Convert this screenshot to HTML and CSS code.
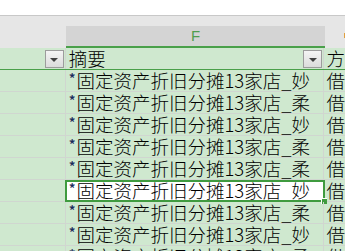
FILE: index.html
```html
<!DOCTYPE html>
<html>
<head>
<meta charset="utf-8">
<link rel="stylesheet" href="styles.css">
</head>
<body>
<div class="sheet">
  <div class="topbar"></div>
  <div class="band"></div>
  <div class="colhead">
    <div class="ch ch-e"></div>
    <div class="ch ch-f">F</div>
    <div class="ch ch-g"><span class="gmark"></span></div>
  </div>
  <div class="row row-filter">
    <div class="c c-e"><span class="fbtn"><span class="tri"></span></span></div>
    <div class="c c-f">摘要<span class="fbtn"><span class="tri"></span></span></div>
    <div class="c c-g">方</div>
  </div>
  <div class="row"><div class="c c-e"></div><div class="c c-f"><span class="ast">*</span>固定资产折旧分摊13家店_妙</div><div class="c c-g">借</div></div>
  <div class="row"><div class="c c-e"></div><div class="c c-f"><span class="ast">*</span>固定资产折旧分摊13家店_柔</div><div class="c c-g">借</div></div>
  <div class="row"><div class="c c-e"></div><div class="c c-f"><span class="ast">*</span>固定资产折旧分摊13家店_妙</div><div class="c c-g">借</div></div>
  <div class="row"><div class="c c-e"></div><div class="c c-f"><span class="ast">*</span>固定资产折旧分摊13家店_柔</div><div class="c c-g">借</div></div>
  <div class="row"><div class="c c-e"></div><div class="c c-f"><span class="ast">*</span>固定资产折旧分摊13家店_柔</div><div class="c c-g">借</div></div>
  <div class="row"><div class="c c-e"></div><div class="c c-f sel"><span class="ast">*</span>固定资产折旧分摊13家店_妙<span class="selbox"><span class="handle"></span></span></div><div class="c c-g">借</div></div>
  <div class="row"><div class="c c-e"></div><div class="c c-f"><span class="ast">*</span>固定资产折旧分摊13家店_柔</div><div class="c c-g">借</div></div>
  <div class="row"><div class="c c-e"></div><div class="c c-f"><span class="ast">*</span>固定资产折旧分摊13家店_妙</div><div class="c c-g">借</div></div>
  <div class="row"><div class="c c-e"></div><div class="c c-f"><span class="ast">*</span>固定资产折旧分摊13家店_柔</div><div class="c c-g">借</div></div>
</div>
</body>
</html>
```
FILE: styles.css
```css
html, body {
  margin: 0;
  padding: 0;
  background: #ffffff;
  overflow: hidden;
}
.sheet {
  width: 345px;
  height: 251px;
  overflow: hidden;
  font-family: "Noto Sans CJK SC", "Noto Sans", sans-serif;
}
.topbar {
  height: 15px;
  background: #ffffff;
  border-bottom: 1px solid #c8c8c8;
}
.band {
  height: 10px;
  background: #e6e6e6;
}
.colhead {
  display: flex;
  height: 22px;
}
.ch {
  box-sizing: border-box;
  height: 22px;
}
.ch-e {
  width: 66px;
  background: #e6e6e6;
}
.ch-f {
  width: 259px;
  background: #d4d4d4;
  border-bottom: 2px solid #4aa04a;
  color: #4f9e4f;
  font-family: "Liberation Sans", sans-serif;
  font-size: 15px;
  line-height: 20px;
  text-align: center;
}
.ch-g {
  flex: 1;
  background: #e6e6e6;
  position: relative;
}
.gmark {
  position: absolute;
  right: 0;
  top: 7px;
  width: 1px;
  height: 5px;
  background: #e0a040;
}
.row {
  display: flex;
  height: 21px;
  border-bottom: 1px solid #d0d6d0;
  background: #cfe8cf;
}
.row-filter {
  border-bottom-color: #4aa04a;
}
.c {
  box-sizing: border-box;
  height: 21px;
  font-size: 18.5px;
  line-height: 21px;
  font-weight: 300;
  color: #000;
  white-space: nowrap;
  overflow: visible;
  position: relative;
}
.c-e {
  width: 66px;
  border-right: 1px solid #d0d6d0;
}
.c-f {
  width: 260px;
  padding-left: 3px;
  border-right: 1px solid #d0d6d0;
}
.c-g {
  flex: 1;
  padding-left: 2px;
}
.ast {
  color: #1a2a5a;
  font-size: 14px;
  font-weight: 500;
  vertical-align: top;
  line-height: 17px;
  margin-right: 1px;
}
.fbtn {
  position: absolute;
  right: 1px;
  top: 2px;
  width: 19px;
  height: 18px;
  box-sizing: border-box;
  border: 1px solid #9c9c9c;
  background: linear-gradient(#f4f4f4, #dcdcdc);
  display: flex;
  align-items: center;
  justify-content: center;
}
.tri {
  width: 0;
  height: 0;
  border-left: 4px solid transparent;
  border-right: 4px solid transparent;
  border-top: 4px solid #404040;
  margin-top: 1px;
}
.sel {
  background: #ffffff;
}
.selbox {
  position: absolute;
  left: -1px;
  top: 0;
  width: 260px;
  height: 22px;
  box-sizing: border-box;
  border: 2px solid #3f9b3f;
}
.handle {
  position: absolute;
  right: -4px;
  bottom: -4px;
  width: 5px;
  height: 5px;
  background: #3f9b3f;
  border-top: 1px solid #ffffff;
  border-left: 1px solid #ffffff;
}
```
